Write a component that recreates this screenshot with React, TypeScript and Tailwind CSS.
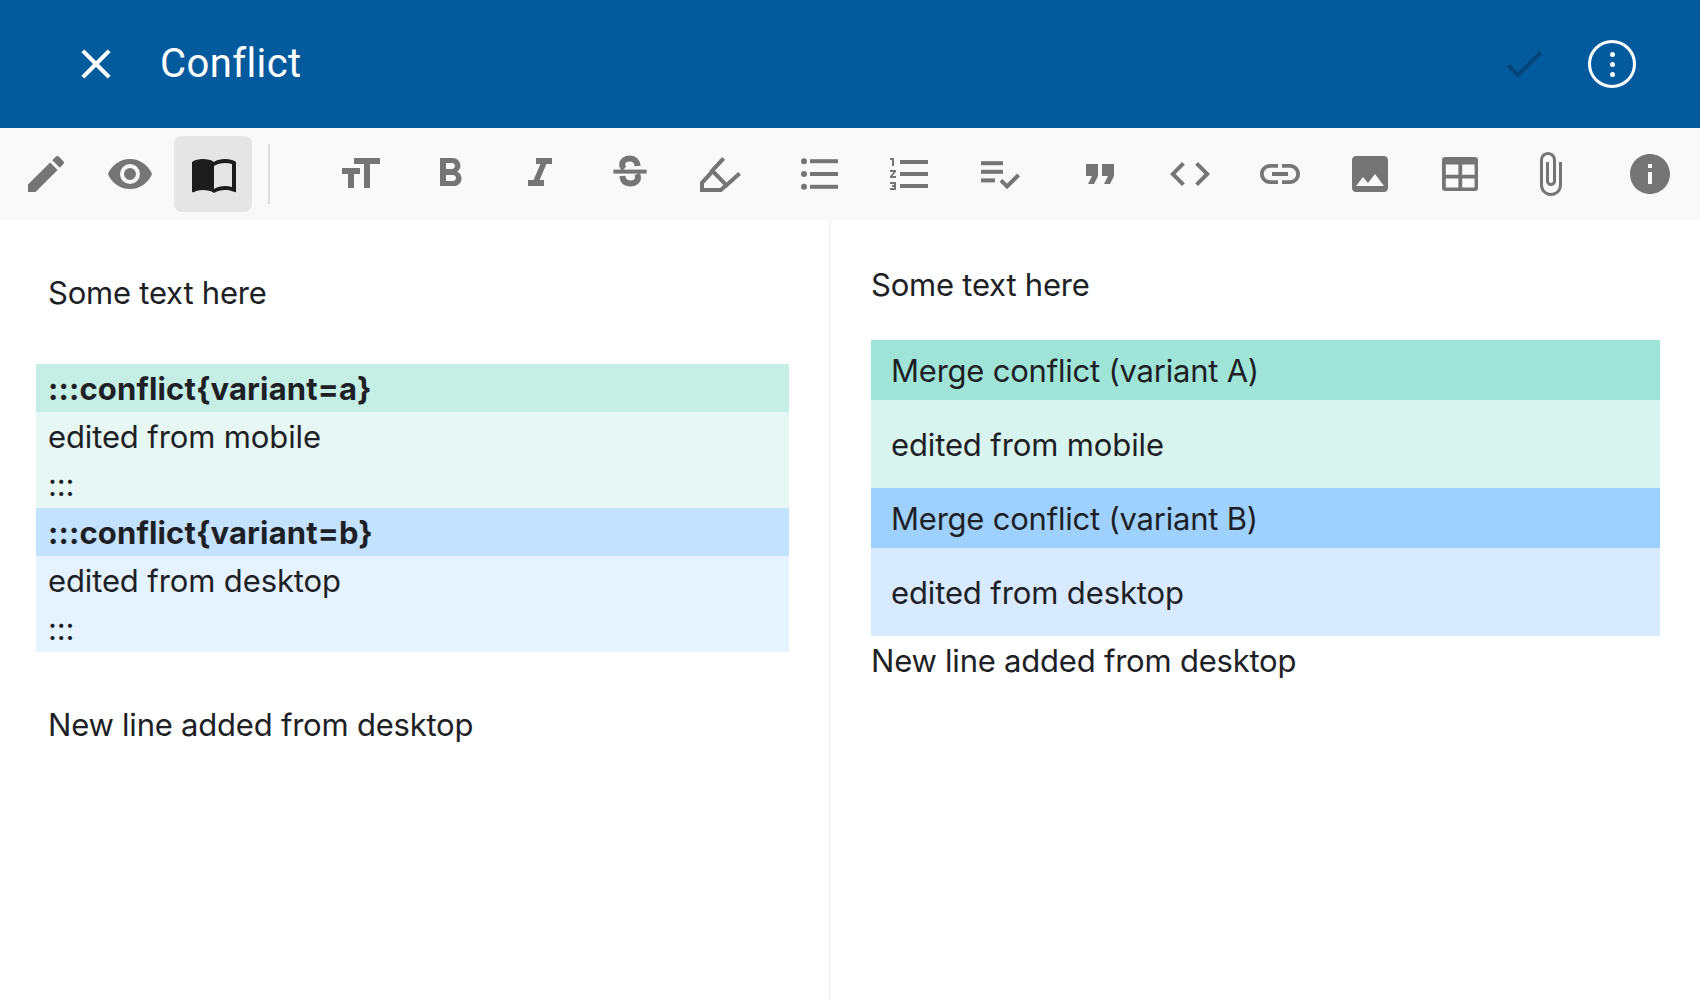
import type { ReactNode } from "react";

function Icon({ children, className = "fill-[#757575]" }: { children: ReactNode; className?: string }) {
  return (
    <svg viewBox="0 0 24 24" className={`h-12 w-12 ${className}`}>
      {children}
    </svg>
  );
}

function ToolButton({ children, active = false }: { children: ReactNode; active?: boolean }) {
  return (
    <div className={`flex h-[76px] w-[78px] shrink-0 items-center justify-center rounded-lg ${active ? "bg-[#e5e5e5]" : ""}`}>
      {children}
    </div>
  );
}

function FormatButton({ children }: { children: ReactNode }) {
  return (
    <div className="flex h-[76px] w-[90px] shrink-0 items-center justify-center">
      <Icon>{children}</Icon>
    </div>
  );
}

const textGroup = [
  <path key="size" d="M9 4v3h5v12h3V7h5V4H9zm-6 8h3v7h3v-7h3V9H3v3z" />,
  <path key="bold" d="M15.6 10.79c.97-.67 1.65-1.77 1.65-2.79 0-2.26-1.75-4-4-4H7v14h7.04c2.09 0 3.71-1.7 3.71-3.79 0-1.52-.86-2.82-2.15-3.42zM10 6.5h3c.83 0 1.5.67 1.5 1.5s-.67 1.5-1.5 1.5h-3v-3zm3.5 9H10v-3h3.5c.83 0 1.5.67 1.5 1.5s-.67 1.5-1.5 1.5z" />,
  <path key="italic" d="M10 4v3h2.21l-3.42 8H6v3h8v-3h-2.21l3.42-8H18V4z" />,
  <g key="strike">
    <path d="M15.8 8c-.2-2.3-1.6-3.7-3.8-3.7-2.3 0-3.9 1.2-3.9 3 0 1 .4 1.6 1 2.1M8.2 13c.2 2.4 1.6 3.7 3.9 3.7 2.3 0 3.9-1.2 3.9-3 0-.6-.2-1.2-.5-1.7" className="fill-none stroke-[#757575] stroke-3" />
    <rect x="3.7" y="9.8" width="16.6" height="2" />
  </g>,
  <g key="highlight" className="fill-none stroke-[#757575] stroke-2">
    <path d="M13.8 4.2 8.1 10.3l7.1 7.3 6.6-5.9" />
    <path d="M8.1 10.8 3 16.4V20h9.4l2.8-2.5" />
  </g>,
];

const listGroup = [
  <g key="bullets">
    <circle cx="4" cy="5.6" r="1.5" />
    <circle cx="4" cy="12" r="1.5" />
    <circle cx="4" cy="18.4" r="1.5" />
    <rect x="7" y="4.6" width="14" height="2" />
    <rect x="7" y="11" width="14" height="2" />
    <rect x="7" y="17.4" width="14" height="2" />
  </g>,
  <path key="numbers" d="M2 17h2v.5H3v1h1v.5H2v1h3v-4H2v1zm1-9h1V4H2v1h1v3zm-1 3h1.8L2 13.1v.9h3v-1H3.2L5 10.9V10H2v1zm5-6v2h14V5H7zm0 14h14v-2H7v2zm0-6h14v-2H7v2z" />,
  <g key="check">
    <rect x="2.5" y="5.6" width="11" height="2" />
    <rect x="2.5" y="9.9" width="11" height="2" />
    <rect x="2.5" y="14.2" width="7" height="2" />
    <path d="m12.5 15.2 3 3 5.8-5.7" className="fill-none stroke-[#757575] stroke-2" />
  </g>,
];

const insertGroup = [
  <path key="quote" d="M6 17h3l2-4V7H5v6h3zm8 0h3l2-4V7h-6v6h3z" />,
  <path key="code" d="M9.4 16.6 4.8 12l4.6-4.6L8 6l-6 6 6 6 1.4-1.4zm5.2 0 4.6-4.6-4.6-4.6L16 6l6 6-6 6-1.4-1.4z" />,
  <path key="link" d="M3.9 12c0-1.71 1.39-3.1 3.1-3.1h4V7H7c-2.76 0-5 2.24-5 5s2.24 5 5 5h4v-1.9H7c-1.71 0-3.1-1.39-3.1-3.1zM8 13h8v-2H8v2zm9-6h-4v1.9h4c1.71 0 3.1 1.39 3.1 3.1s-1.39 3.1-3.1 3.1h-4V17h4c2.76 0 5-2.24 5-5s-2.24-5-5-5z" />,
  <path key="image" d="M21 19V5c0-1.1-.9-2-2-2H5c-1.1 0-2 .9-2 2v14c0 1.1.9 2 2 2h14c1.1 0 2-.9 2-2zM8.5 13.5l2.5 3.01L14.5 12l4.5 6H5l3.5-4.5z" />,
  <path key="table" fillRule="evenodd" d="M4.5 3.5h15A1.5 1.5 0 0 1 21 5v14a1.5 1.5 0 0 1-1.5 1.5h-15A1.5 1.5 0 0 1 3 19V5a1.5 1.5 0 0 1 1.5-1.5zM4.9 7.3v5.1h6.3V7.3H4.9zm8.2 0v5.1h6.2V7.3h-6.2zM4.9 14.3v4.5h6.3v-4.5H4.9zm8.2 0v4.5h6.2v-4.5h-6.2z" />,
  <path key="clip" d="M16.5 6v11.5c0 2.21-1.79 4-4 4s-4-1.79-4-4V5c0-1.38 1.12-2.5 2.5-2.5s2.5 1.12 2.5 2.5v10.5c0 .55-.45 1-1 1s-1-.45-1-1V6H10v9.5c0 1.38 1.12 2.5 2.5 2.5s2.5-1.12 2.5-2.5V5c0-2.21-1.79-4-4-4S7 2.79 7 5v12.5c0 3.04 2.46 5.5 5.5 5.5s5.5-2.46 5.5-5.5V6h-1.5z" />,
];

export default function App() {
  return (
    <div className="flex h-[1000px] w-[1700px] flex-col overflow-hidden bg-white font-['Inter',sans-serif] text-[31px] leading-12 tracking-[-0.22px] text-[#1d2125]">
      <header className="flex h-32 shrink-0 items-center bg-[#035a9d] pl-[71px] pr-[64px] text-white">
        <svg viewBox="0 0 24 24" className="h-[50px] w-[50px] fill-white">
          <path d="M19 6.41 17.59 5 12 10.59 6.41 5 5 6.41 10.59 12 5 17.59 6.41 19 12 13.41 17.59 19 19 17.59 13.41 12z" />
        </svg>
        <h1 className="ml-[39px] font-['Roboto',sans-serif] text-[40px] font-normal tracking-[0.4px]">Conflict</h1>
        <svg viewBox="0 0 24 24" className="ml-auto h-12 w-12 fill-[#03467c]">
          <path d="M9 16.17 4.83 12l-1.42 1.41L9 19 21 7l-1.41-1.41z" />
        </svg>
        <div className="ml-10 flex h-12 w-12 flex-col items-center justify-center gap-[5px] rounded-full border-[3px] border-white">
          <span className="h-[5px] w-[5px] rounded-full bg-white" />
          <span className="h-[5px] w-[5px] rounded-full bg-white" />
          <span className="h-[5px] w-[5px] rounded-full bg-white" />
        </div>
      </header>

      <div className="flex h-[92px] shrink-0 items-center bg-[#f9f9f9] pl-[7px]">
        <ToolButton>
          <Icon><path d="M3 17.25V21h3.75L17.81 9.94l-3.75-3.75L3 17.25zM20.71 7.04a1 1 0 0 0 0-1.41l-2.34-2.34a1 1 0 0 0-1.41 0l-1.83 1.83 3.75 3.75 1.83-1.83z" /></Icon>
        </ToolButton>
        <div className="w-1.5" />
        <ToolButton>
          <Icon><path d="M12 4.5C7 4.5 2.73 7.61 1 12c1.73 4.39 6 7.5 11 7.5s9.27-3.11 11-7.5c-1.73-4.39-6-7.5-11-7.5zM12 17a5 5 0 1 1 0-10 5 5 0 0 1 0 10zm0-8a3 3 0 1 0 0 6 3 3 0 0 0 0-6z" /></Icon>
        </ToolButton>
        <div className="w-[5px]" />
        <ToolButton active>
          <Icon className="translate-x-px fill-[#1c1c1c]"><path d="M21 5c-1.11-.35-2.33-.5-3.5-.5-1.95 0-4.05.4-5.5 1.5-1.45-1.1-3.55-1.5-5.5-1.5S2.45 4.9 1 6v14.65c0 .25.25.5.5.5.1 0 .15-.05.25-.05C3.1 20.45 5.05 20 6.5 20c1.95 0 4.05.4 5.5 1.5 1.35-.85 3.8-1.5 5.5-1.5 1.65 0 3.35.3 4.75 1.05.1.05.15.05.25.05.25 0 .5-.25.5-.5V6c-.6-.45-1.25-.75-2-1zm0 13.5c-1.1-.35-2.3-.5-3.5-.5-1.7 0-4.15.65-5.5 1.5V8c1.35-.85 3.8-1.5 5.5-1.5 1.2 0 2.4.15 3.5.5v11.5z" /></Icon>
        </ToolButton>
        <div className="ml-4 h-[60px] w-0.5 bg-[#dcdcdc]" />
        <div className="ml-[45px] flex gap-2.5">
          <div className="flex">
            {textGroup.map((icon) => <FormatButton key={icon.key}>{icon}</FormatButton>)}
          </div>
          <div className="flex">
            {listGroup.map((icon) => <FormatButton key={icon.key}>{icon}</FormatButton>)}
          </div>
          <div className="flex">
            {insertGroup.map((icon) => <FormatButton key={icon.key}>{icon}</FormatButton>)}
          </div>
          <FormatButton>
            <path d="M12 2C6.48 2 2 6.48 2 12s4.48 10 10 10 10-4.48 10-10S17.52 2 12 2zm1 15h-2v-6h2v6zm0-8h-2V7h2v2z" />
          </FormatButton>
        </div>
      </div>

      <main className="flex min-h-0 flex-1">
        <section className="w-[830px] shrink-0 border-r border-[#f0f0f0] pt-[49px]">
          <p className="pl-12">Some text here</p>
          <div className="ml-9 mt-[47px] w-[753px]">
            <div className="h-12 bg-[#c5eee5] pl-3 pt-px font-bold tracking-[0.14px]">:::conflict{"{variant=a}"}</div>
            <div className="h-24 bg-[#e7f7f4] pl-3 pt-px tracking-[-0.12px]">edited from mobile<br />:::</div>
            <div className="h-12 bg-[#c3e2ff] pl-3 pt-px font-bold tracking-[0.14px]">:::conflict{"{variant=b}"}</div>
            <div className="h-24 bg-[#e5f3ff] pl-3 pt-px tracking-[-0.12px]">edited from desktop<br />:::</div>
          </div>
          <p className="mt-[49px] pl-12">New line added from desktop</p>
        </section>
        <section className="min-w-0 flex-1 pl-[41px] pr-10 pt-[41px]">
          <p>Some text here</p>
          <div className="mt-[31px] bg-[#9fe4d6] px-5 pb-[5px] pt-[7px]">Merge conflict (variant A)</div>
          <div className="bg-[#d8f4ee] px-5 pb-[19px] pt-[21px] tracking-[-0.12px]">edited from mobile</div>
          <div className="bg-[#9fd1ff] px-5 pb-[5px] pt-[7px]">Merge conflict (variant B)</div>
          <div className="bg-[#d8eaff] px-5 pb-[19px] pt-[21px] tracking-[-0.12px]">edited from desktop</div>
          <p className="mt-px">New line added from desktop</p>
        </section>
      </main>
    </div>
  );
}
